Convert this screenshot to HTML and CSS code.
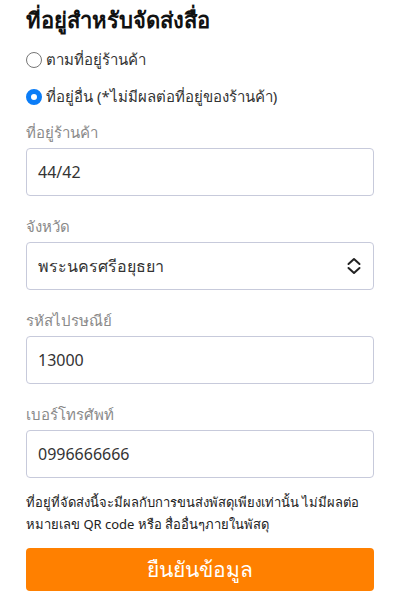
FILE: index.html
```html
<!DOCTYPE html>
<html lang="th">
<head>
<meta charset="utf-8">
<link rel="stylesheet" href="styles.css">
</head>
<body>
<div class="page">
  <h1 class="title">ที่อยู่สำหรับจัดส่งสื่อ</h1>
  <div class="radios">
    <label class="radio"><span class="dot"></span><span>ตามที่อยู่ร้านค้า</span></label>
    <label class="radio"><span class="dot checked"></span><span>ที่อยู่อื่น (*ไม่มีผลต่อที่อยู่ของร้านค้า)</span></label>
  </div>
  <div class="field">
    <div class="label">ที่อยู่ร้านค้า</div>
    <div class="input">44/42</div>
  </div>
  <div class="field">
    <div class="label">จังหวัด</div>
    <div class="input select"><span>พระนครศรีอยุธยา</span>
      <svg class="chev" width="16" height="20" viewBox="0 0 16 20"><path d="M2.5 8 L8 3 L13.5 8 M2.5 12 L8 17 L13.5 12" fill="none" stroke="#222" stroke-width="2" stroke-linecap="round" stroke-linejoin="round"/></svg>
    </div>
  </div>
  <div class="field">
    <div class="label">รหัสไปรษณีย์</div>
    <div class="input">13000</div>
  </div>
  <div class="field">
    <div class="label">เบอร์โทรศัพท์</div>
    <div class="input">0996666666</div>
  </div>
  <p class="note">ที่อยู่ที่จัดส่งนี้จะมีผลกับการขนส่งพัสดุเพียงเท่านั้น ไม่มีผลต่อ หมายเลข QR code หรือ สื่ออื่นๆภายในพัสดุ</p>
  <button class="btn">ยืนยันข้อมูล</button>
</div>
</body>
</html>
```
FILE: styles.css
```css
* { box-sizing: border-box; }
body {
  margin: 0;
  background: #fff;
  font-family: "Noto Sans", "DejaVu Sans", sans-serif;
  color: #2a2a2a;
}
.page {
  padding: 6px 26px 0 26px;
  display: flex;
  flex-direction: column;
}
.title {
  margin: 0;
  font-size: 22px;
  font-weight: 800;
  line-height: 26px;
  color: #111;
}
.radios {
  margin-top: 16px;
  display: flex;
  flex-direction: column;
  gap: 14px;
}
.radio {
  display: flex;
  align-items: center;
  gap: 4px;
  font-size: 15px;
  line-height: 23px;
  color: #333;
}
.dot {
  width: 16px;
  height: 16px;
  border-radius: 50%;
  border: 1.5px solid #767676;
  flex: none;
}
.dot.checked {
  border: 5px solid #0b7df7;
  background: #fff;
}
.field {
  display: flex;
  flex-direction: column;
}
.radios + .field { margin-top: 14px; }
.field + .field { margin-top: 20px; }
.label {
  font-size: 15px;
  line-height: 20px;
  color: #8a8a8a;
  margin-bottom: 6px;
}
.input {
  height: 48px;
  border: 1px solid #c7cadb;
  border-radius: 4px;
  padding: 0 11px;
  display: flex;
  align-items: center;
  font-size: 16px;
  color: #333;
}
.select { justify-content: space-between; padding-right: 11px; }
.chev { flex: none; }
.note {
  margin: 13px 0 0 0;
  font-size: 13px;
  line-height: 22px;
  color: #222;
}
.btn {
  margin-top: 13px;
  height: 43px;
  border: none;
  border-radius: 4px;
  background: #ff8000;
  color: #fff;
  font-family: inherit;
  font-size: 21px;
  font-weight: 400;
  padding: 0;
}
```
